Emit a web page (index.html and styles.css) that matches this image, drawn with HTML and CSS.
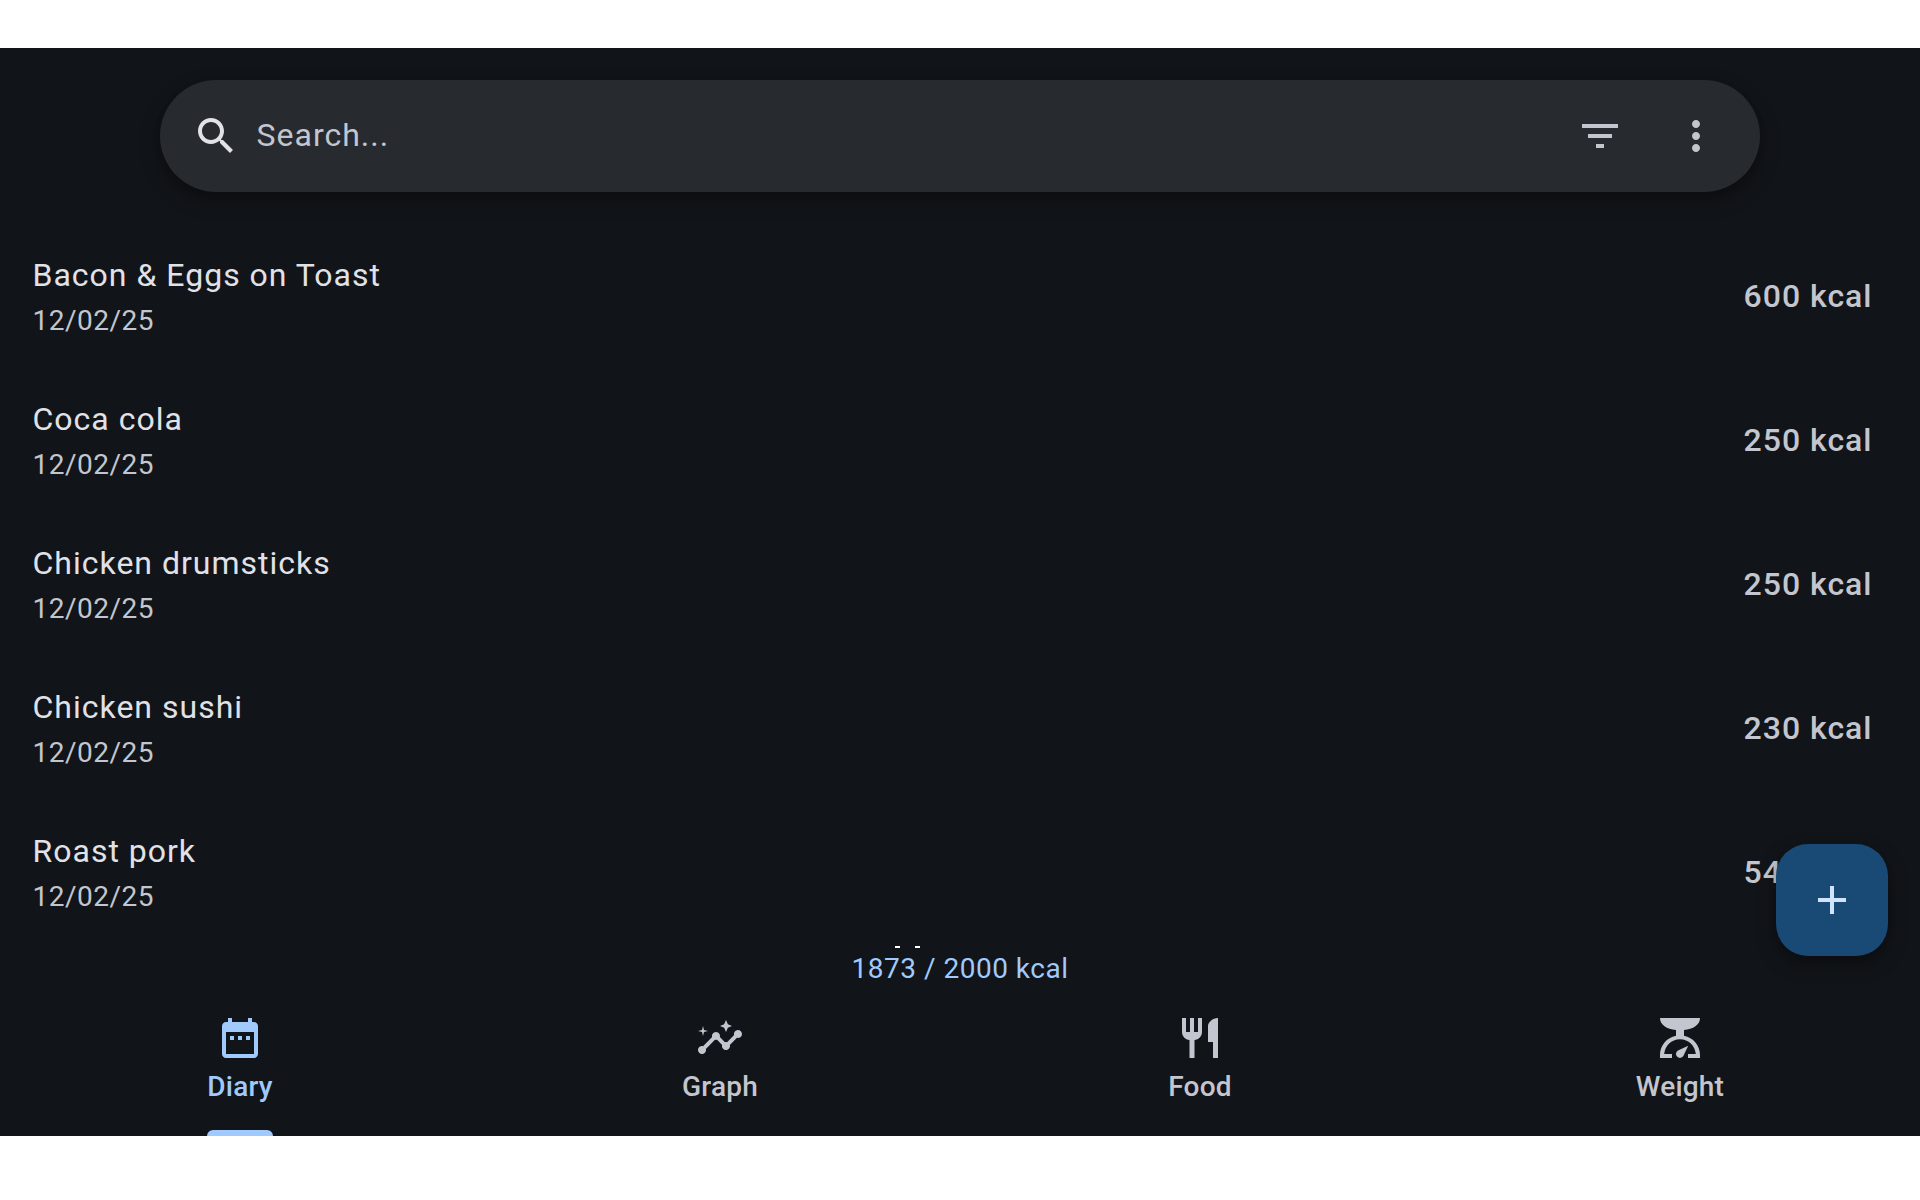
FILE: index.html
```
<!DOCTYPE html>
<html lang="en">
<head>
<meta charset="utf-8">
<title>Diary</title>
<link rel="stylesheet" href="styles.css">
</head>
<body>
<div class="app">
  <header class="search">
    <svg class="icon search-icon" viewBox="0 0 24 24"><path d="M15.5 14h-.79l-.28-.27C15.41 12.59 16 11.11 16 9.5 16 5.91 13.09 3 9.5 3S3 5.91 3 9.5 5.91 16 9.5 16c1.61 0 3.09-.59 4.23-1.57l.27.28v.79l5 4.99L20.49 19l-4.99-5zm-6 0C7.01 14 5 11.99 5 9.5S7.01 5 9.5 5 14 7.01 14 9.5 11.99 14 9.5 14z"/></svg>
    <span class="search-text">Search...</span>
    <svg class="icon" viewBox="0 0 24 24"><path d="M10 18h4v-2h-4v2zM3 6v2h18V6H3zm3 7h12v-2H6v2z"/></svg>
    <svg class="icon" viewBox="0 0 24 24"><path d="M12 8c1.1 0 2-.9 2-2s-.9-2-2-2-2 .9-2 2 .9 2 2 2zm0 2c-1.1 0-2 .9-2 2s.9 2 2 2 2-.9 2-2-.9-2-2-2zm0 6c-1.1 0-2 .9-2 2s.9 2 2 2 2-.9 2-2-.9-2-2-2z"/></svg>
  </header>

  <ul class="list">
    <li class="row"><div><div class="name">Bacon &amp; Eggs on Toast</div><div class="date">12/02/25</div></div><span class="kcal">600 kcal</span></li>
    <li class="row"><div><div class="name">Coca cola</div><div class="date">12/02/25</div></div><span class="kcal">250 kcal</span></li>
    <li class="row"><div><div class="name">Chicken drumsticks</div><div class="date">12/02/25</div></div><span class="kcal">250 kcal</span></li>
    <li class="row"><div><div class="name">Chicken sushi</div><div class="date">12/02/25</div></div><span class="kcal">230 kcal</span></li>
    <li class="row"><div><div class="name">Roast pork</div><div class="date">12/02/25</div></div><span class="kcal">540 kcal</span></li>
  </ul>

  <div class="peek"><i></i><i></i></div>
  <div class="total">1873 / 2000 kcal</div>

  <nav class="tabs">
    <a class="tab active">
      <svg class="icon" viewBox="0 0 24 24"><path d="M9 11H7v2h2v-2zm4 0h-2v2h2v-2zm4 0h-2v2h2v-2zm2-7h-1V2h-2v2H8V2H6v2H5c-1.11 0-1.99.9-1.99 2L3 20c0 1.1.89 2 2 2h14c1.1 0 2-.9 2-2V6c0-1.1-.9-2-2-2zm0 16H5V9h14v11z"/></svg>
      <span>Diary</span>
    </a>
    <a class="tab">
      <svg class="icon" viewBox="0 0 24 24"><path d="M21 8c-1.45 0-2.26 1.44-1.93 2.51l-3.55 3.56c-.3-.09-.74-.09-1.04 0l-2.55-2.55C12.27 10.45 11.46 9 10 9c-1.45 0-2.27 1.44-1.93 2.52l-4.56 4.55C2.44 15.74 1 16.55 1 18c0 1.1.9 2 2 2 1.45 0 2.26-1.44 1.93-2.51l4.55-4.56c.3.09.74.09 1.04 0l2.55 2.55C12.73 16.55 13.54 18 15 18c1.45 0 2.27-1.44 1.93-2.52l3.56-3.55C21.56 12.26 23 11.45 23 10c0-1.1-.9-2-2-2z"/><path d="M15 9l.94-2.07L18 6l-2.06-.93L15 3l-.92 2.07L12 6l2.08.93zM3.5 11L4 9l2-.5L4 8l-.5-2L3 8l-2 .5L3 9z"/></svg>
      <span>Graph</span>
    </a>
    <a class="tab">
      <svg class="icon" viewBox="0 0 24 24"><path d="M11 9H9V2H7v7H5V2H3v7c0 2.12 1.66 3.84 3.75 3.97V22h2.5v-9.03C11.34 12.84 13 11.12 13 9V2h-2v7zm5-3v8h2.5v8H21V2c-2.76 0-5 2.24-5 4z"/></svg>
      <span>Food</span>
    </a>
    <a class="tab">
      <svg class="icon" viewBox="0 0 24 24"><path d="M2 2h20c0 3.4-3.4 5.6-8 6v2.9c4.6.9 8 4.8 8 9.6V22h-6v-2h3.900c-.3-4.200-3.600-7.400-7.900-7.400S4.400 15.800 4.100 20H8v2H2v-1.500c0-4.800 3.400-8.700 8-9.600V8C5.400 7.600 2 5.400 2 2z"/><path d="M16.100 15.900l-2.300 4.900A2 2 0 1 1 11 18.200z"/></svg>
      <span>Weight</span>
    </a>
  </nav>

  <button class="fab" aria-label="Add">
    <svg class="icon" viewBox="0 0 24 24"><path d="M19 13h-6v6h-2v-6H5v-2h6V5h2v6h6v2z"/></svg>
  </button>
</div>
</body>
</html>
```
FILE: styles.css
```
* { box-sizing: border-box; }
body {
  margin: 0;
  padding: 48px 0 64px;
  background: #fff;
  font-family: Roboto, "Liberation Sans", sans-serif;
}
.app {
  position: relative;
  height: 1088px;
  padding-top: 32px;
  overflow: hidden;
  display: flex;
  flex-direction: column;
  background: #111418;
  color: #c3c6cf;
}
.icon { display: block; width: 48px; height: 48px; flex: none; fill: currentColor; }
.search {
  display: flex;
  align-items: center;
  gap: 48px;
  height: 112px;
  flex: none;
  margin: 0 160px;
  padding: 0 40px 0 32px;
  border-radius: 56px;
  background: #272a2f;
  box-shadow: 0 8px 20px rgba(0, 0, 0, .25), 0 2px 6px rgba(0, 0, 0, .12);
}
.search-icon { color: #e1e2e8; }
.search-text { flex: 1; margin-left: -31.5px; padding-bottom: 2px; font-size: 32px; line-height: 48px; letter-spacing: 1px; }
.list { list-style: none; margin: 32px 0 0; padding: 0; flex: none; height: 722px; }
.row {
  display: flex;
  align-items: center;
  justify-content: space-between;
  height: 144px;
  padding: 0 47.5px 0 32.5px;
}
.name { font-size: 32px; line-height: 48px; letter-spacing: 1px; color: #e1e2e8; }
.date { margin-top: 2px; font-size: 28px; line-height: 40px; letter-spacing: .5px; }
.kcal { font-size: 32px; line-height: 48px; font-weight: 500; letter-spacing: 1px; }
.peek { display: flex; gap: 15px; height: 2px; flex: none; margin-left: 895px; }
.peek i { width: 5px; height: 2px; background: #fff; }
.total {
  flex: none;
  height: 40px;
  font-size: 28px;
  line-height: 42px;
  letter-spacing: .5px;
  text-align: center;
  color: #a0cafd;
}
.tabs { display: grid; grid-template-columns: repeat(4, 1fr); flex: 1; }
.tab {
  display: flex;
  flex-direction: column;
  align-items: center;
  padding-top: 26px;
  font-size: 28px;
  line-height: 40px;
  font-weight: 500;
  letter-spacing: .2px;
}
.tab span { margin-top: 5px; }
.active { color: #a0cafd; }
.active::after {
  content: "";
  width: 66px;
  height: 6px;
  margin-top: auto;
  border-radius: 6px 6px 0 0;
  background: #a0cafd;
}
.fab {
  position: absolute;
  right: 32px;
  bottom: 180px;
  display: grid;
  place-items: center;
  width: 112px;
  height: 112px;
  padding: 0;
  border: 0;
  border-radius: 32px;
  background: #194975;
  color: #d1e4ff;
  box-shadow: 0 8px 20px rgba(0, 0, 0, .25), 0 2px 6px rgba(0, 0, 0, .12);
}
```
